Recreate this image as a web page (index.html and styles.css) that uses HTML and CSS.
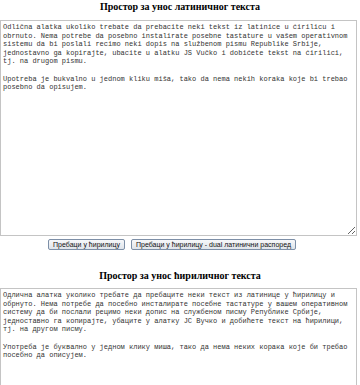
FILE: index.html
```html
<!DOCTYPE html>
<html>
<head>
    <title>JS Vučko</title>
    <link rel="stylesheet" href="styles.css">
</head>
<body>
    <!-- Latin input -->
    <h2 class="box-title">Простор за унос латиничног текста</h2>
    <textarea id="latinText" class="text-box" spellcheck="false">Odlična alatka ukoliko trebate da prebacite neki tekst iz latinice u ćirilicu i obrnuto. Nema potrebe da posebno instalirate posebne tastature u vašem operativnom sistemu da bi poslali recimo neki dopis na službenom pismu Republike Srbije, jednostavno ga kopirajte, ubacite u alatku JS Vučko i dobićete tekst na ćirilici, tj. na drugom pismu.

Upotreba je bukvalno u jednom kliku miša, tako da nema nekih koraka koje bi trebao posebno da opisujem.</textarea>

    <!-- Convert buttons -->
    <div class="button-row">
        <button id="toCyrButton" class="convert-button first">Пребаци у ћирилицу</button>
        <button id="toCyrDualButton" class="convert-button second">Пребаци у ћирилицу - dual латинични распоред</button>
    </div>

    <!-- Cyrillic input -->
    <h2 class="box-title lower">Простор за унос ћириличног текста</h2>
    <textarea id="cyrText" class="text-box" spellcheck="false">Одлична алатка уколико требате да пребаците неки текст из латинице у ћирилицу и обрнуто. Нема потребе да посебно инсталирате посебне тастатуре у вашем оперативном систему да би послали рецимо неки допис на службеном писму Републике Србије, једноставно га копирајте, убаците у алатку ЈС Вучко и добићете текст на ћирилици, тј. на другом писму.

Употреба је буквално у једном клику миша, тако да нема неких корака које би требао посебно да описујем.</textarea>
</body>
</html>
```

FILE: styles.css
```css
/* Page */
body {
    margin: 0;
    background-color: #ffffff;
    font-family: "Liberation Serif", serif;
}

/* Headings above the text boxes */
.box-title {
    margin: 0;
    padding-top: 1px;
    height: 19px;
    line-height: 12px;
    font-size: 10px;
    font-weight: bold;
    text-align: center;
    color: #000000;
}

.box-title.lower {
    margin-top: 19px;
    height: 18px;
}

/* Text boxes */
.text-box {
    display: block;
    box-sizing: border-box;
    width: 357px;
    height: 216px;
    margin: 0;
    padding: 2px 2px;
    border: 1px solid #c4c4c4;
    font-family: "Liberation Mono", "Courier New", monospace;
    font-size: 7px;
    line-height: 8.6px;
    color: #333333;
    background-color: #ffffff;
}

/* Buttons */
.button-row {
    display: flex;
    gap: 6px;
    padding-left: 48px;
    margin-top: 3px;
}

.convert-button {
    height: 11px;
    padding: 0 3px;
    border: 1px solid #7d8fa7;
    border-radius: 2px;
    background: linear-gradient(#f7f8fa, #dfe4ea);
    font-family: "Liberation Sans", Arial, sans-serif;
    font-size: 7px;
    line-height: 9px;
    color: #111111;
    cursor: pointer;
}

.convert-button.first {
    width: 77px;
}

.convert-button.second {
    width: 165px;
}
```
